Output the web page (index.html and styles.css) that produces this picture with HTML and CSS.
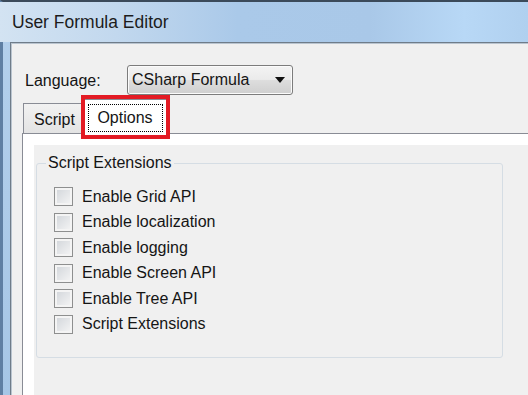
FILE: index.html
```html
<!DOCTYPE html>
<html lang="en">
<head>
    <meta charset="UTF-8">
    <title>User Formula Editor</title>
    <link rel="stylesheet" href="styles.css">
</head>
<body>
    <div class="window">
        <div class="titlebar">User Formula Editor</div>

        <div class="client">
            <div class="lang-row">
                <label class="lang-label">Language:</label>
                <div class="combo">
                    <span class="combo-text">CSharp Formula</span>
                    <span class="combo-arrow"></span>
                </div>
            </div>

            <div class="tabs">
                <div class="tab-strip">
                    <div class="tab">Script</div>
                    <div class="tab active"><span class="focus">Options</span></div>
                    <!-- annotation box drawn over the selected tab -->
                    <span class="highlight"></span>
                </div>

                <div class="tab-page">
                    <div class="page-inner">
                        <fieldset class="group">
                            <legend>Script Extensions</legend>
                            <div class="check-row"><span class="check"></span>Enable Grid API</div>
                            <div class="check-row"><span class="check"></span>Enable localization</div>
                            <div class="check-row"><span class="check"></span>Enable logging</div>
                            <div class="check-row"><span class="check"></span>Enable Screen API</div>
                            <div class="check-row"><span class="check"></span>Enable Tree API</div>
                            <div class="check-row"><span class="check"></span>Script Extensions</div>
                        </fieldset>
                    </div>
                </div>
            </div>
        </div>
    </div>
</body>
</html>
```

FILE: styles.css
```css
html, body {
    margin: 0;
    height: 100%;
    overflow: hidden;
}

body {
    font-family: 'Liberation Sans', Arial, sans-serif;
    font-size: 16px;
    color: #151515;
    background-color: #f0f0f0;
}

.window {
    height: 100vh;
    display: flex;
    flex-direction: column;
    border-top: 2px solid #3b4a5a;
    border-left: 3px solid #5f7fa3;
    padding-left: 7px;
    background: linear-gradient(to bottom, #b4d0ec, #a6c6e6);
    box-sizing: border-box;
}

.titlebar {
    height: 40px;
    line-height: 41px;
    margin-left: -10px;
    padding-left: 12px;
    font-size: 17.5px;
    color: #1c1c1c;
    background: linear-gradient(to right, #d3e3f2 0%, #c2d8ee 22%, #aac9e9 45%, #a9c8e8 70%, #b8d8f6 88%, #b0d0ef 100%);
}

.client {
    flex-grow: 1;
    display: flex;
    flex-direction: column;
    background-color: #f0f0f0;
    border-top: 1px solid #6f7c89;
    border-left: 1px solid #6f7c89;
    box-shadow: inset 1px 1px 0 #b9c4cf;
    padding-top: 1px;
    padding-left: 1px;
}

.lang-row {
    display: flex;
    align-items: center;
    padding-top: 21px;
    padding-left: 13px;
    height: 30px;
}

.lang-label {
    width: 102px;
    padding-top: 1px;
}

.combo {
    width: 166px;
    height: 30px;
    box-sizing: border-box;
    border: 1px solid #7c7c7c;
    border-radius: 3px;
    background: linear-gradient(to bottom, #f3f3f3 0%, #ebebeb 48%, #dddddd 52%, #cfcfcf 100%);
    box-shadow: inset 0 0 0 1px #fbfbfb;
    display: flex;
    align-items: center;
    justify-content: space-between;
    padding-left: 4px;
    padding-right: 7px;
}

.combo-arrow {
    width: 0;
    height: 0;
    border-left: 5px solid transparent;
    border-right: 5px solid transparent;
    border-top: 6px solid #111;
}

.tabs {
    flex-grow: 1;
    display: flex;
    flex-direction: column;
    margin-top: 4px;
    margin-left: 10px;
}

.tab-strip {
    position: relative;
    display: flex;
    align-items: flex-end;
    height: 34px;
    padding-left: 1px;
}

.tab {
    height: 30px;
    width: 60px;
    box-sizing: border-box;
    border: 1px solid #898c95;
    border-bottom: none;
    background: linear-gradient(to bottom, #f2f2f2, #e3e3e3);
    display: flex;
    align-items: center;
    justify-content: center;
    padding-top: 3px;
    padding-left: 3px;
}

.tab.active {
    height: 35px;
    width: 84px;
    margin-bottom: -1px;
    background-color: #fff;
    background-image: none;
    z-index: 1;
    padding-top: 1px;
    padding-left: 0;
}

.focus {
    width: 75px;
    height: 28px;
    box-sizing: border-box;
    border: 1px dotted #000;
    display: flex;
    align-items: center;
    justify-content: center;
}

.highlight {
    position: absolute;
    left: 59px;
    top: -4px;
    width: 89px;
    height: 44px;
    box-sizing: border-box;
    border: 4px solid #e31b24;
    z-index: 2;
}

.tab-page {
    flex-grow: 1;
    display: flex;
    border-top: 1px solid #898c95;
    border-left: 1px solid #898c95;
    background-color: #fff;
    padding: 11px 0 0 11px;
}

.page-inner {
    flex-grow: 1;
    background-color: #f0f0f0;
    padding-left: 2px;
    padding-top: 9px;
}

.group {
    width: 467px;
    height: 204px;
    box-sizing: border-box;
    margin: 0;
    border: 1px solid #d5dde4;
    border-radius: 3px;
    padding: 12px 0 0 17px;
}

.group legend {
    margin-left: -8px;
    padding: 0 2px;
}

.check-row {
    display: flex;
    align-items: center;
    height: 25.5px;
}

.check {
    width: 17px;
    height: 17px;
    border: 1px solid #8e8f8f;
    background: linear-gradient(135deg, #d0d4d9, #f6f6f6);
    box-shadow: inset 0 0 0 2px #f4f4f4;
    margin-right: 9px;
}
```
